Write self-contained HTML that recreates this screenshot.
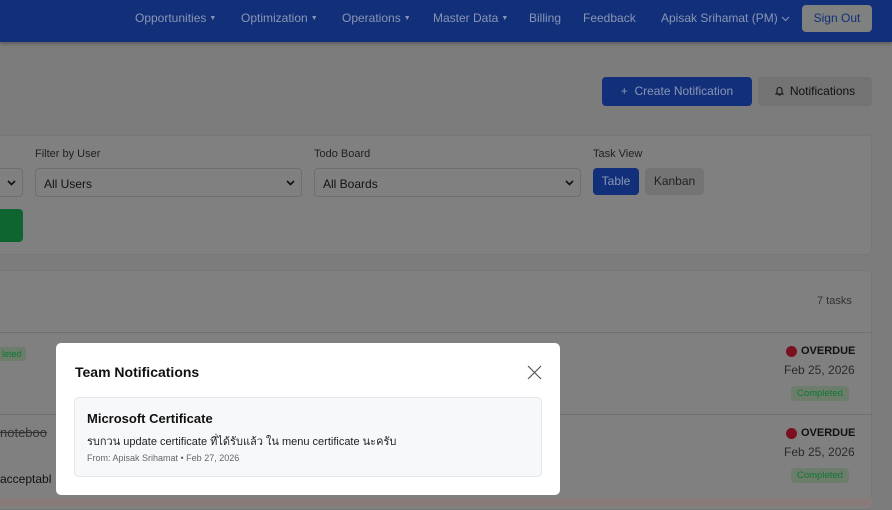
<!DOCTYPE html>
<html><head><meta charset="utf-8"><style>
*{box-sizing:border-box;margin:0;padding:0}
body{width:892px;height:506px;overflow:hidden;background:#7b7c7b;font-family:"Liberation Sans","Noto Sans CJK SC",sans-serif;position:relative;font-size:12px;color:#1a1a1a}
.nav{position:absolute;left:0;top:0;width:892px;height:42px;background:#12307a;box-shadow:0 2px 3px rgba(0,0,0,.25)}
.nav span{position:absolute;top:11px;color:#8a95b5;font-size:12px}
.nav small{font-size:7px;vertical-align:2px;margin-left:3px}
.so{position:absolute;left:802px;top:5px;width:70px;height:27px;background:#7f8080;border-radius:4px;color:#12307a;font-size:12px;text-align:center;line-height:27px}
.btn{position:absolute;border-radius:4px;font-size:12px;line-height:29px;text-align:center}
.card{position:absolute;background:#808080;border:1px solid #767776;border-radius:5px}
.lbl{position:absolute;font-size:11px;color:#1f1f1f}
.sel{position:absolute;height:29px;border:1px solid #6e6f6e;border-radius:4px;background:#808080;font-size:12px;padding:8px 0 0 8px;color:#111}
.sel svg{position:absolute;right:6px;top:11px}
.modal{position:absolute;left:56px;top:343px;width:504px;height:152px;background:#fff;border-radius:5px}
.item{position:absolute;left:18px;top:54px;width:468px;height:80px;background:#f7f8fa;border:1px solid #e2e5ea;border-radius:5px}
.small{position:absolute;font-size:10px}
</style></head><body>
<div class="nav">
<span style="left:135px">Opportunities<small>▼</small></span>
<span style="left:241px">Optimization<small>▼</small></span>
<span style="left:342px">Operations<small>▼</small></span>
<span style="left:433px">Master Data<small>▼</small></span>
<span style="left:529px">Billing</span>
<span style="left:583px">Feedback</span>
<span style="left:661px">Apisak Srihamat (PM) <svg width="9" height="6" viewBox="0 0 9 6"><path d="M1 1l3.5 3.5L8 1" stroke="#8a95b5" fill="none"/></svg></span>
<div class="so">Sign Out</div>
</div>
<div class="btn" style="left:602px;top:77px;width:150px;height:29px;background:#12307a;color:#8a95b5">+&nbsp; Create Notification</div>
<div class="btn" style="left:758px;top:77px;width:114px;height:29px;background:#727372;color:#111"><svg width="9" height="10" viewBox="0 0 9 10" style="vertical-align:-1px;margin-right:6px"><path d="M2 7V4a2.5 2.5 0 015 0v3l1 1H1zM3.5 9h2" stroke="#111" fill="none"/></svg>Notifications</div>
<div class="card" style="left:-6px;top:135px;width:878px;height:120px"></div>
<div class="lbl" style="left:35px;top:148px">Filter by User</div>
<div class="lbl" style="left:314px;top:148px">Todo Board</div>
<div class="lbl" style="left:593px;top:148px">Task View</div>
<div class="sel" style="left:-10px;top:168px;width:33px"><svg width="9" height="6" viewBox="0 0 9 6"><path d="M1 1l3.5 3.5L8 1" stroke="#111" stroke-width="1.6" fill="none"/></svg></div>
<div class="sel" style="left:35px;top:168px;width:267px">All Users<svg width="9" height="6" viewBox="0 0 9 6"><path d="M1 1l3.5 3.5L8 1" stroke="#111" stroke-width="1.6" fill="none"/></svg></div>
<div class="sel" style="left:314px;top:168px;width:267px">All Boards<svg width="9" height="6" viewBox="0 0 9 6"><path d="M1 1l3.5 3.5L8 1" stroke="#111" stroke-width="1.6" fill="none"/></svg></div>
<div class="btn" style="left:593px;top:168px;width:46px;height:27px;line-height:27px;background:#12307a;color:#8a95b5">Table</div>
<div class="btn" style="left:645px;top:168px;width:59px;height:27px;line-height:27px;background:#737473;color:#222">Kanban</div>
<div class="btn" style="left:-5px;top:209px;width:28px;height:33px;background:#0f6530"></div>
<div class="card" style="left:-6px;top:270px;width:878px;height:240px;border-radius:5px"></div>
<div style="position:absolute;left:0;top:332px;width:872px;height:1px;background:#6f706f"></div>
<div style="position:absolute;left:0;top:414px;width:872px;height:1px;background:#6f706f"></div>
<div style="position:absolute;left:0;top:498px;width:872px;height:8px;background:#897a7a"></div>
<div class="small" style="left:817px;top:295px;color:#333;font-size:11px">7 tasks</div>
<div class="small" style="left:-2px;top:347px;background:#6c7d6c;color:#173;padding:2px 4px;border-radius:3px;font-size:9px">leted</div>
<div style="position:absolute;left:0;top:425px;font-size:13px;color:#333;text-decoration:line-through">noteboo</div>
<div style="position:absolute;left:0;top:472px;font-size:12px;color:#111">acceptabl</div>
<div style="position:absolute;left:786px;top:346px;width:11px;height:11px;border-radius:50%;background:#7a1020"></div>
<div style="position:absolute;left:801px;top:345px;font-size:11px;font-weight:bold;color:#111">OVERDUE</div>
<div style="position:absolute;left:784px;top:363px;font-size:12px;color:#2a2a2a">Feb 25, 2026</div>
<div class="small" style="left:791px;top:386px;background:#6c7d6c;color:#173;padding:2px 6px;border-radius:4px;font-size:9.5px">Completed</div>
<div style="position:absolute;left:786px;top:428px;width:11px;height:11px;border-radius:50%;background:#7a1020"></div>
<div style="position:absolute;left:801px;top:427px;font-size:11px;font-weight:bold;color:#111">OVERDUE</div>
<div style="position:absolute;left:784px;top:445px;font-size:12px;color:#2a2a2a">Feb 25, 2026</div>
<div class="small" style="left:791px;top:468px;background:#6c7d6c;color:#173;padding:2px 6px;border-radius:4px;font-size:9.5px">Completed</div>
<div class="modal">
<div style="position:absolute;left:19px;top:21px;font-size:14px;font-weight:bold;color:#111">Team Notifications</div>
<svg style="position:absolute;left:471px;top:22px" width="15" height="15" viewBox="0 0 15 15"><path d="M1 1L14 14M14 1L1 14" stroke="#555" stroke-width="1.2"/></svg>
<div class="item">
<div style="position:absolute;left:12px;top:13px;font-size:13px;font-weight:bold;color:#111">Microsoft Certificate</div>
<div style="position:absolute;left:12px;top:34px;font-size:11px;color:#222">รบกวน update certificate ที่ได้รับแล้ว ใน menu certificate นะครับ</div>
<div style="position:absolute;left:12px;top:55px;font-size:9px;color:#666">From: Apisak Srihamat • Feb 27, 2026</div>
</div>
</div>
</body></html>
